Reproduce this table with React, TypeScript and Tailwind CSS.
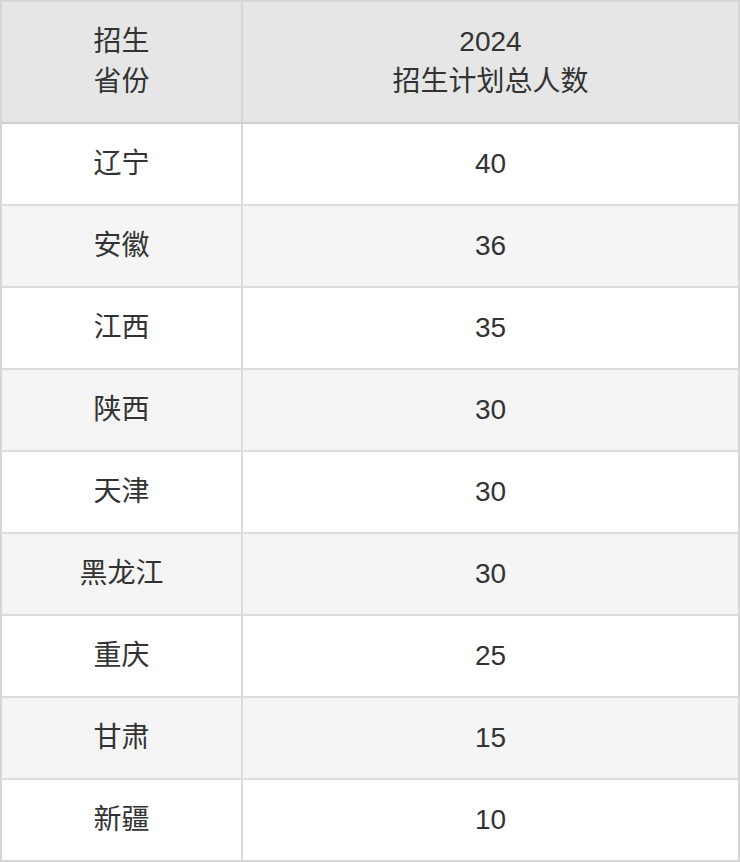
export default function App() {
  const rows: [string, string][] = [
    ["辽宁", "40"],
    ["安徽", "36"],
    ["江西", "35"],
    ["陕西", "30"],
    ["天津", "30"],
    ["黑龙江", "30"],
    ["重庆", "25"],
    ["甘肃", "15"],
    ["新疆", "10"],
  ];
  return (
    <div
      className="w-[740px] h-[862px] bg-white text-[#333333] text-[28px] leading-[40px]"
      style={{ fontFamily: '"Liberation Sans", "Noto Sans CJK SC", sans-serif' }}
    >
      <div className="border-2 border-[#d6d6d6] flex flex-col">
        <div className="flex h-[122px] bg-[#e6e6e6] border-b-2 border-[#cfcfcf]">
          <div className="w-[241px] border-r-2 border-[#d6d6d6] flex items-center justify-center text-center">
            <div>
              招生
              <br />
              省份
            </div>
          </div>
          <div className="flex-1 flex items-center justify-center text-center">
            <div>
              2024
              <br />
              招生计划总人数
            </div>
          </div>
        </div>
        {rows.map(([p, n], i) => (
          <div
            key={i}
            className={
              i === rows.length - 1
                ? "flex h-[80px] " + (i % 2 === 1 ? "bg-[#f5f5f5]" : "bg-white")
                : "flex h-[82px] border-b-2 border-[#dcdcdc] " + (i % 2 === 1 ? "bg-[#f5f5f5]" : "bg-white")
            }
          >
            <div className="w-[241px] border-r-2 border-[#dcdcdc] flex items-center justify-center">
              {p}
            </div>
            <div className="flex-1 flex items-center justify-center">{n}</div>
          </div>
        ))}
      </div>
    </div>
  );
}
